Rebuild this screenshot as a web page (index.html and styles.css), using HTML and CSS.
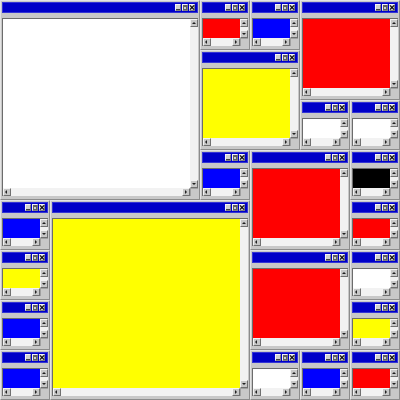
FILE: index.html
```html
<!DOCTYPE html>
<html>
<head>
<meta charset="utf-8">
<link rel="stylesheet" href="styles.css">
</head>
<body>
<div class="desk">
  <div class="win c1 w4 r1 h4"><div class="title"><span class="tb min"></span><span class="tb max"></span><span class="tb close"></span></div><div class="client"><div class="view white"></div><div class="vbar"><span class="sb up"></span><span class="sb down"></span></div><div class="hbar"><span class="sb left"></span><span class="sb right"></span></div><div class="corner"></div></div></div>
  <div class="win c5 r1"><div class="title"><span class="tb min"></span><span class="tb max"></span><span class="tb close"></span></div><div class="client"><div class="view red"></div><div class="vbar"><span class="sb up"></span><span class="sb down"></span></div><div class="hbar"><span class="sb left"></span><span class="sb right"></span></div><div class="corner"></div></div></div>
  <div class="win c6 r1"><div class="title"><span class="tb min"></span><span class="tb max"></span><span class="tb close"></span></div><div class="client"><div class="view blue"></div><div class="vbar"><span class="sb up"></span><span class="sb down"></span></div><div class="hbar"><span class="sb left"></span><span class="sb right"></span></div><div class="corner"></div></div></div>
  <div class="win c7 w2 r1 h2"><div class="title"><span class="tb min"></span><span class="tb max"></span><span class="tb close"></span></div><div class="client"><div class="view red"></div><div class="vbar"><span class="sb up"></span><span class="sb down"></span></div><div class="hbar"><span class="sb left"></span><span class="sb right"></span></div><div class="corner"></div></div></div>
  <div class="win c5 w2 r2 h2"><div class="title"><span class="tb min"></span><span class="tb max"></span><span class="tb close"></span></div><div class="client"><div class="view yellow"></div><div class="vbar"><span class="sb up"></span><span class="sb down"></span></div><div class="hbar"><span class="sb left"></span><span class="sb right"></span></div><div class="corner"></div></div></div>
  <div class="win c7 r3"><div class="title"><span class="tb min"></span><span class="tb max"></span><span class="tb close"></span></div><div class="client"><div class="view white"></div><div class="vbar"><span class="sb up"></span><span class="sb down"></span></div><div class="hbar"><span class="sb left"></span><span class="sb right"></span></div><div class="corner"></div></div></div>
  <div class="win c8 r3"><div class="title"><span class="tb min"></span><span class="tb max"></span><span class="tb close"></span></div><div class="client"><div class="view white"></div><div class="vbar"><span class="sb up"></span><span class="sb down"></span></div><div class="hbar"><span class="sb left"></span><span class="sb right"></span></div><div class="corner"></div></div></div>
  <div class="win c5 r4"><div class="title"><span class="tb min"></span><span class="tb max"></span><span class="tb close"></span></div><div class="client"><div class="view blue"></div><div class="vbar"><span class="sb up"></span><span class="sb down"></span></div><div class="hbar"><span class="sb left"></span><span class="sb right"></span></div><div class="corner"></div></div></div>
  <div class="win c6 w2 r4 h2"><div class="title"><span class="tb min"></span><span class="tb max"></span><span class="tb close"></span></div><div class="client"><div class="view red"></div><div class="vbar"><span class="sb up"></span><span class="sb down"></span></div><div class="hbar"><span class="sb left"></span><span class="sb right"></span></div><div class="corner"></div></div></div>
  <div class="win c8 r4"><div class="title"><span class="tb min"></span><span class="tb max"></span><span class="tb close"></span></div><div class="client"><div class="view black"></div><div class="vbar"><span class="sb up"></span><span class="sb down"></span></div><div class="hbar"><span class="sb left"></span><span class="sb right"></span></div><div class="corner"></div></div></div>
  <div class="win c1 r5"><div class="title"><span class="tb min"></span><span class="tb max"></span><span class="tb close"></span></div><div class="client"><div class="view blue"></div><div class="vbar"><span class="sb up"></span><span class="sb down"></span></div><div class="hbar"><span class="sb left"></span><span class="sb right"></span></div><div class="corner"></div></div></div>
  <div class="win c2 w4 r5 h4"><div class="title"><span class="tb min"></span><span class="tb max"></span><span class="tb close"></span></div><div class="client"><div class="view yellow"></div><div class="vbar"><span class="sb up"></span><span class="sb down"></span></div><div class="hbar"><span class="sb left"></span><span class="sb right"></span></div><div class="corner"></div></div></div>
  <div class="win c8 r5"><div class="title"><span class="tb min"></span><span class="tb max"></span><span class="tb close"></span></div><div class="client"><div class="view red"></div><div class="vbar"><span class="sb up"></span><span class="sb down"></span></div><div class="hbar"><span class="sb left"></span><span class="sb right"></span></div><div class="corner"></div></div></div>
  <div class="win c1 r6"><div class="title"><span class="tb min"></span><span class="tb max"></span><span class="tb close"></span></div><div class="client"><div class="view yellow"></div><div class="vbar"><span class="sb up"></span><span class="sb down"></span></div><div class="hbar"><span class="sb left"></span><span class="sb right"></span></div><div class="corner"></div></div></div>
  <div class="win c6 w2 r6 h2"><div class="title"><span class="tb min"></span><span class="tb max"></span><span class="tb close"></span></div><div class="client"><div class="view red"></div><div class="vbar"><span class="sb up"></span><span class="sb down"></span></div><div class="hbar"><span class="sb left"></span><span class="sb right"></span></div><div class="corner"></div></div></div>
  <div class="win c8 r6"><div class="title"><span class="tb min"></span><span class="tb max"></span><span class="tb close"></span></div><div class="client"><div class="view white"></div><div class="vbar"><span class="sb up"></span><span class="sb down"></span></div><div class="hbar"><span class="sb left"></span><span class="sb right"></span></div><div class="corner"></div></div></div>
  <div class="win c1 r7"><div class="title"><span class="tb min"></span><span class="tb max"></span><span class="tb close"></span></div><div class="client"><div class="view blue"></div><div class="vbar"><span class="sb up"></span><span class="sb down"></span></div><div class="hbar"><span class="sb left"></span><span class="sb right"></span></div><div class="corner"></div></div></div>
  <div class="win c8 r7"><div class="title"><span class="tb min"></span><span class="tb max"></span><span class="tb close"></span></div><div class="client"><div class="view yellow"></div><div class="vbar"><span class="sb up"></span><span class="sb down"></span></div><div class="hbar"><span class="sb left"></span><span class="sb right"></span></div><div class="corner"></div></div></div>
  <div class="win c1 r8"><div class="title"><span class="tb min"></span><span class="tb max"></span><span class="tb close"></span></div><div class="client"><div class="view blue"></div><div class="vbar"><span class="sb up"></span><span class="sb down"></span></div><div class="hbar"><span class="sb left"></span><span class="sb right"></span></div><div class="corner"></div></div></div>
  <div class="win c6 r8"><div class="title"><span class="tb min"></span><span class="tb max"></span><span class="tb close"></span></div><div class="client"><div class="view white"></div><div class="vbar"><span class="sb up"></span><span class="sb down"></span></div><div class="hbar"><span class="sb left"></span><span class="sb right"></span></div><div class="corner"></div></div></div>
  <div class="win c7 r8"><div class="title"><span class="tb min"></span><span class="tb max"></span><span class="tb close"></span></div><div class="client"><div class="view blue"></div><div class="vbar"><span class="sb up"></span><span class="sb down"></span></div><div class="hbar"><span class="sb left"></span><span class="sb right"></span></div><div class="corner"></div></div></div>
  <div class="win c8 r8"><div class="title"><span class="tb min"></span><span class="tb max"></span><span class="tb close"></span></div><div class="client"><div class="view red"></div><div class="vbar"><span class="sb up"></span><span class="sb down"></span></div><div class="hbar"><span class="sb left"></span><span class="sb right"></span></div><div class="corner"></div></div></div>
</div>
</body>
</html>
```

FILE: styles.css
```css
* { box-sizing: border-box; }
html, body { margin: 0; padding: 0; }
body { background: #c8c8c8; width: 400px; height: 400px; overflow: hidden; font-family: "Liberation Sans", sans-serif; }

.desk {
  display: grid;
  grid-template-columns: repeat(8, 50px);
  grid-template-rows: repeat(8, 50px);
  width: 400px;
  height: 400px;
}

.c1 { grid-column-start: 1; } .c2 { grid-column-start: 2; } .c3 { grid-column-start: 3; } .c4 { grid-column-start: 4; }
.c5 { grid-column-start: 5; } .c6 { grid-column-start: 6; } .c7 { grid-column-start: 7; } .c8 { grid-column-start: 8; }
.r1 { grid-row-start: 1; } .r2 { grid-row-start: 2; } .r3 { grid-row-start: 3; } .r4 { grid-row-start: 4; }
.r5 { grid-row-start: 5; } .r6 { grid-row-start: 6; } .r7 { grid-row-start: 7; } .r8 { grid-row-start: 8; }
.w2 { grid-column-end: span 2; } .w4 { grid-column-end: span 4; }
.h2 { grid-row-end: span 2; } .h4 { grid-row-end: span 4; }

.win {
  display: flex;
  flex-direction: column;
  background: #c8c8c8;
  border: 1px solid;
  border-color: #e4e4e4 #8c8c8c #8c8c8c #e4e4e4;
  padding: 1px 1px 3px 1px;
  min-width: 0;
  min-height: 0;
}

.title {
  height: 11px;
  flex: none;
  background: #0000c8;
  border: 1px solid #3434d6;
  display: flex;
  justify-content: flex-end;
  align-items: center;
  gap: 1px;
  padding-right: 2px;
  margin-bottom: 5px;
}

.tb {
  position: relative;
  width: 6px;
  height: 7px;
  background: #d0d0d0;
  border: 1px solid;
  border-color: #f4f4f4 #808080 #808080 #f4f4f4;
}
.tb.min::after {
  content: "";
  position: absolute;
  left: 0; right: 0; bottom: 0;
  height: 1px;
  background: #404040;
}
.tb.max::after {
  content: "";
  position: absolute;
  left: 0; top: 0; right: 0; bottom: 0;
  border: 1px solid #606060;
  border-top-width: 2px;
}
.tb.close::before, .tb.close::after {
  content: "";
  position: absolute;
  left: -1px; top: 2px;
  width: 6px;
  height: 1px;
  background: #000;
  transform: rotate(45deg);
}
.tb.close::after { transform: rotate(-45deg); }

.client {
  flex: 1;
  min-height: 0;
  display: grid;
  grid-template-columns: 1fr 8px;
  grid-template-rows: 1fr 8px;
  border-top: 1px solid #6c6c6c;
  border-left: 1px solid #6c6c6c;
}

.view { min-width: 0; min-height: 0; }
.white { background: #ffffff; }
.red { background: #ff0000; }
.blue { background: #0000ff; }
.yellow { background: #ffff00; }
.black { background: #000000; }

.vbar {
  background: #f2f2f2;
  display: flex;
  flex-direction: column;
  justify-content: space-between;
}
.hbar {
  background: #f2f2f2;
  display: flex;
  justify-content: space-between;
}
.corner {
  background: #c8c8c8;
  border-left: 1px solid #a0a0a0;
  border-top: 1px solid #a0a0a0;
}

.sb {
  position: relative;
  width: 8px;
  height: 8px;
  flex: none;
  background: #c8c8c8;
  border: 1px solid;
  border-color: #f4f4f4 #707070 #707070 #f4f4f4;
}
.sb::after {
  content: "";
  position: absolute;
  width: 0; height: 0;
  border: 2px solid transparent;
}
.sb.up::after { left: 1px; top: 0; border-bottom-color: #202020; }
.sb.down::after { left: 1px; top: 2px; border-top-color: #202020; }
.sb.left::after { left: -1px; top: 1px; border-right-color: #202020; }
.sb.right::after { left: 2px; top: 1px; border-left-color: #202020; }
```
